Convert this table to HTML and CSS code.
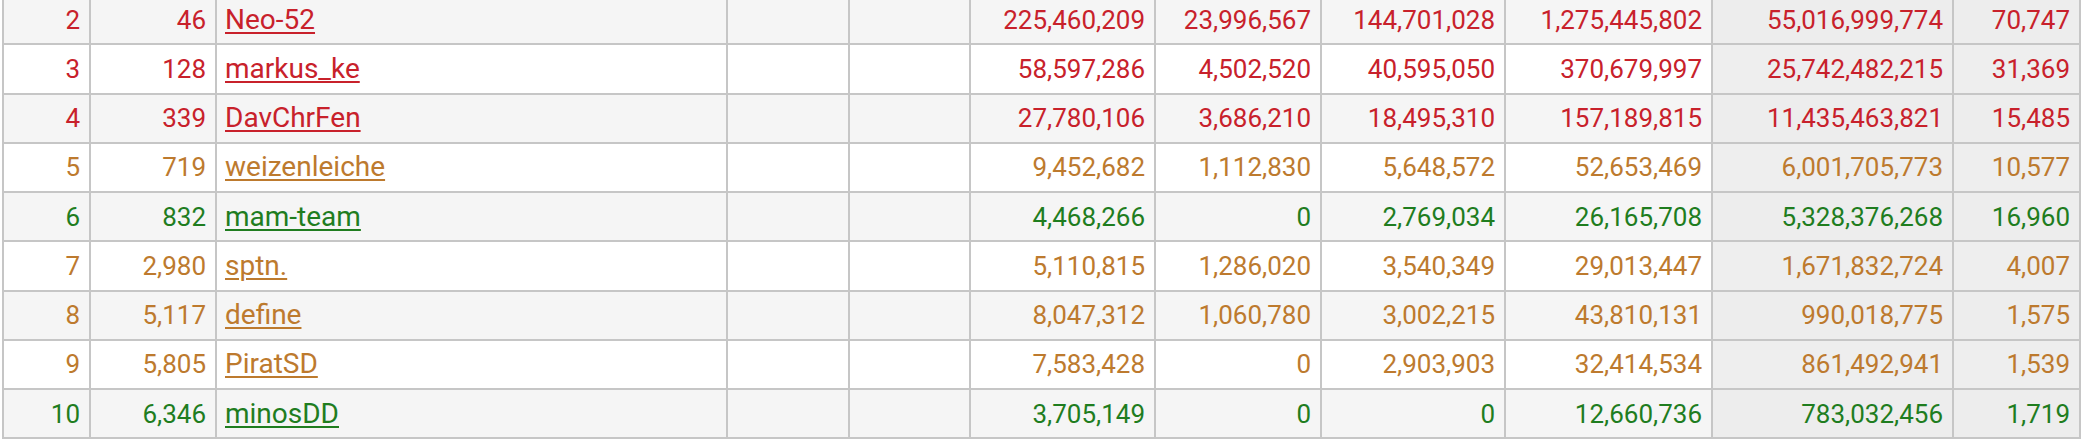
FILE: index.html
```html
<!DOCTYPE html>
<html>
<head>
<meta charset="utf-8">
<link rel="stylesheet" href="styles.css">
</head>
<body>
<table class="stats">
<colgroup>
<col class="c1"><col class="c2"><col class="c3"><col class="c4"><col class="c5"><col class="c6"><col class="c7"><col class="c8"><col class="c9"><col class="c10"><col class="c11">
</colgroup>
<tbody>
<tr class="odd red"><td>2</td><td>46</td><td class="name"><a href="#">Neo-52</a></td><td></td><td></td><td>225,460,209</td><td>23,996,567</td><td>144,701,028</td><td>1,275,445,802</td><td class="hl">55,016,999,774</td><td class="hl">70,747</td></tr>
<tr class="even red"><td>3</td><td>128</td><td class="name"><a href="#">markus_ke</a></td><td></td><td></td><td>58,597,286</td><td>4,502,520</td><td>40,595,050</td><td>370,679,997</td><td class="hl">25,742,482,215</td><td class="hl">31,369</td></tr>
<tr class="odd red"><td>4</td><td>339</td><td class="name"><a href="#">DavChrFen</a></td><td></td><td></td><td>27,780,106</td><td>3,686,210</td><td>18,495,310</td><td>157,189,815</td><td class="hl">11,435,463,821</td><td class="hl">15,485</td></tr>
<tr class="even orange"><td>5</td><td>719</td><td class="name"><a href="#">weizenleiche</a></td><td></td><td></td><td>9,452,682</td><td>1,112,830</td><td>5,648,572</td><td>52,653,469</td><td class="hl">6,001,705,773</td><td class="hl">10,577</td></tr>
<tr class="odd green"><td>6</td><td>832</td><td class="name"><a href="#">mam-team</a></td><td></td><td></td><td>4,468,266</td><td>0</td><td>2,769,034</td><td>26,165,708</td><td class="hl">5,328,376,268</td><td class="hl">16,960</td></tr>
<tr class="even orange"><td>7</td><td>2,980</td><td class="name"><a href="#">sptn.</a></td><td></td><td></td><td>5,110,815</td><td>1,286,020</td><td>3,540,349</td><td>29,013,447</td><td class="hl">1,671,832,724</td><td class="hl">4,007</td></tr>
<tr class="odd orange"><td>8</td><td>5,117</td><td class="name"><a href="#">define</a></td><td></td><td></td><td>8,047,312</td><td>1,060,780</td><td>3,002,215</td><td>43,810,131</td><td class="hl">990,018,775</td><td class="hl">1,575</td></tr>
<tr class="even orange"><td>9</td><td>5,805</td><td class="name"><a href="#">PiratSD</a></td><td></td><td></td><td>7,583,428</td><td>0</td><td>2,903,903</td><td>32,414,534</td><td class="hl">861,492,941</td><td class="hl">1,539</td></tr>
<tr class="odd green"><td>10</td><td>6,346</td><td class="name"><a href="#">minosDD</a></td><td></td><td></td><td>3,705,149</td><td>0</td><td>0</td><td>12,660,736</td><td class="hl">783,032,456</td><td class="hl">1,719</td></tr>
</tbody>
</table>
</body>
</html>
```

FILE: styles.css
```css
html, body {
  margin: 0;
  padding: 0;
  background: #ffffff;
  overflow: hidden;
}
body {
  padding-left: 2px;
  font-family: Roboto, "Liberation Sans", sans-serif;
}
.stats {
  border-collapse: collapse;
  table-layout: fixed;
  width: 2079px;
  margin-top: -6px;
  font-size: 26px;
}
.c1 { width: 87px; }
.c2 { width: 126px; }
.c3 { width: 511px; }
.c4 { width: 122px; }
.c5 { width: 121px; }
.c6 { width: 185px; }
.c7 { width: 166px; }
.c8 { width: 184px; }
.c9 { width: 207px; }
.c10 { width: 241px; }
.c11 { width: 127px; }
.stats td {
  border: 2px solid #c6c6c6;
  height: 47.25px;
  padding: 0 9px 0 8px;
  text-align: right;
  vertical-align: middle;
  white-space: nowrap;
  line-height: 30px;
}
.stats td.name {
  text-align: left;
  font-size: 28px;
}
.stats tr.odd td { background: #f5f5f5; }
.stats tr.even td { background: #ffffff; }
.stats tr td.hl { background: #eeeeee; }
.stats tr.odd td.hl { background: #ededed; }
.red td, .red a { color: #c8212b; }
.orange td, .orange a { color: #bd7a2e; }
.green td, .green a { color: #1f7d1f; }
.stats a {
  text-decoration: underline;
  text-underline-offset: 3px;
  text-decoration-thickness: 2px;
}
```
